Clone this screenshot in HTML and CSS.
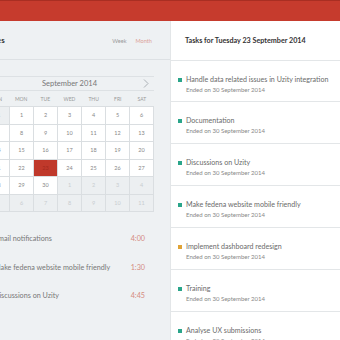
FILE: index.html
```html
<!DOCTYPE html>
<html lang="en">
<head>
  <meta charset="UTF-8" />
  <title>Tasks</title>
  <link rel="stylesheet" href="styles.css">
</head>
<body>
  <div class="topbar"></div>

  <div class="main">
    <section class="left">
      <div class="left-head">
        <h2>Activities</h2>
        <div class="toggle">
          <span>Week</span>
          <span class="active">Month</span>
        </div>
      </div>

      <div class="calendar">
        <div class="cal-title">
          <span>September 2014</span>
          <svg class="next" width="6" height="9" viewBox="0 0 6 9"><polyline points="1,0.5 5,4.5 1,8.5" fill="none" stroke="#aab0b5" stroke-width="1"/></svg>
        </div>
        <div class="cal-days">
          <span>SUN</span><span>MON</span><span>TUE</span><span>WED</span><span>THU</span><span>FRI</span><span>SAT</span>
        </div>
        <div class="cal-grid">
          <span class="off">31</span><span>1</span><span>2</span><span>3</span><span>4</span><span>5</span><span>6</span>
          <span>7</span><span>8</span><span>9</span><span>10</span><span>11</span><span>12</span><span>13</span>
          <span>14</span><span>15</span><span>16</span><span>17</span><span>18</span><span>19</span><span>20</span>
          <span>21</span><span>22</span><span class="today">23</span><span>24</span><span>25</span><span>26</span><span>27</span>
          <span>28</span><span>29</span><span>30</span><span class="off">1</span><span class="off">2</span><span class="off">3</span><span class="off">4</span>
          <span class="off">5</span><span class="off">6</span><span class="off">7</span><span class="off">8</span><span class="off">9</span><span class="off">10</span><span class="off">11</span>
        </div>
      </div>

      <ul class="timelog">
        <li><span>Email notifications</span><span class="time">4:00</span></li>
        <li><span>Make fedena website mobile friendly</span><span class="time">1:30</span></li>
        <li><span>Discussions on Uzity</span><span class="time">4:45</span></li>
      </ul>
    </section>

    <section class="right">
      <h2 class="tasks-title">Tasks for Tuesday 23 September 2014</h2>
      <ul class="tasks">
        <li><i class="dot"></i><div><p class="name">Handle data related issues in Uzity integration</p><p class="date">Ended on 30 September 2014</p></div></li>
        <li><i class="dot"></i><div><p class="name">Documentation</p><p class="date">Ended on 30 September 2014</p></div></li>
        <li><i class="dot"></i><div><p class="name">Discussions on Uzity</p><p class="date">Ended on 30 September 2014</p></div></li>
        <li><i class="dot"></i><div><p class="name">Make fedena website mobile friendly</p><p class="date">Ended on 30 September 2014</p></div></li>
        <li><i class="dot pending"></i><div><p class="name">Implement dashboard redesign</p><p class="date">Ended on 30 September 2014</p></div></li>
        <li><i class="dot"></i><div><p class="name">Training</p><p class="date">Ended on 30 September 2014</p></div></li>
        <li><i class="dot"></i><div><p class="name">Analyse UX submissions</p><p class="date">Ended on 30 September 2014</p></div></li>
      </ul>
    </section>
  </div>
</body>
</html>
```

FILE: styles.css
```css
body {
  margin: 0;
  font-family: Lato, "Open Sans", sans-serif;
  background: #eef1f3;
  overflow: hidden;
}

.topbar {
  height: 20px;
  background: #c63b2d;
  border-top: 1px solid #a92e22;
}

.main {
  display: flex;
  height: 319px;
}

/* left column: calendar + time log */
.left {
  width: 210px;
  margin-left: -40px;
  flex-shrink: 0;
  background: #eef1f3;
}

.left-head {
  display: flex;
  justify-content: space-between;
  align-items: center;
  height: 38px;
  padding: 0 18px 0 11px;
  border-bottom: 1px solid #dde1e4;
}

.left-head h2 {
  margin: 0;
  font-size: 8px;
  font-weight: 700;
  color: #333;
}

.toggle {
  display: flex;
  gap: 9px;
  font-size: 5.6px;
  color: #999;
}

.toggle .active {
  color: #dca197;
}

.calendar {
  width: 169px;
  margin: 16px 0 0 25px;
}

.cal-title {
  position: relative;
  height: 13px;
  border-top: 1px solid #dde1e4;
  border-bottom: 1px solid #dde1e4;
  display: flex;
  align-items: center;
  justify-content: center;
  font-size: 7.5px;
  color: #777;
}

.cal-title .next {
  position: absolute;
  right: 5px;
  top: 2px;
}

.cal-days {
  display: grid;
  grid-template-columns: repeat(7, 1fr);
  height: 15px;
  align-items: center;
  text-align: center;
  font-size: 5px;
  color: #999;
}

.cal-grid {
  display: grid;
  grid-template-columns: repeat(7, 1fr);
  grid-auto-rows: 16.5px;
  background: #dadee1;
  gap: 1px;
  border: 1px solid #dadee1;
}

.cal-grid span {
  display: flex;
  align-items: center;
  justify-content: center;
  background: #fff;
  font-size: 5.5px;
  color: #888;
}

.cal-grid .off {
  background: #eceff1;
  color: #c8cdd0;
}

.cal-grid .today {
  background: #c0392b;
  color: #a32a1f;
}

.timelog {
  list-style: none;
  margin: 22px 0 0;
  padding: 0 25px 0 34px;
}

.timelog li {
  display: flex;
  justify-content: space-between;
  height: 28.5px;
  font-size: 7.2px;
  color: #777;
}

.timelog .time {
  color: #d58b80;
}

/* right column: tasks */
.right {
  flex: 1;
  background: #fff;
  border-left: 1px solid #e3e6e8;
}

.tasks-title {
  margin: 0;
  height: 39px;
  line-height: 39px;
  padding-left: 14px;
  font-size: 7.2px;
  font-weight: 700;
  color: #333;
  border-bottom: 1px solid #e3e6e8;
}

.tasks {
  list-style: none;
  margin: 0;
  padding: 0;
}

.tasks li {
  display: flex;
  gap: 4px;
  height: 41px;
  padding: 14px 0 0 7px;
  box-sizing: border-box;
  border-bottom: 1px solid #e3e6e8;
}

.tasks li + li {
  height: 42px;
  padding-top: 14px;
}

.dot {
  width: 4px;
  height: 4px;
  margin-top: 3px;
  background: #2aa58a;
}

.dot.pending {
  background: #e0a336;
}

.tasks p {
  margin: 0;
}

.name {
  font-size: 7.1px;
  line-height: 10px;
  color: #6a6a6a;
}

.date {
  font-size: 6px;
  line-height: 10px;
  color: #888;
}
```
